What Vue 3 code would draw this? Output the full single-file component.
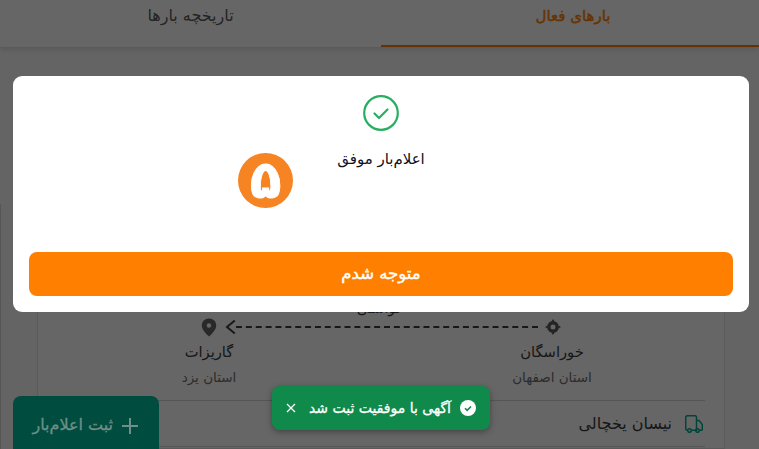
<script setup>
const stops = [
  { city: 'خوراسگان', province: 'استان اصفهان' },
  { city: 'گاریزات', province: 'استان یزد' },
]
</script>

<template>
  <div class="page" dir="rtl">
    <nav class="tabs">
      <div class="tab active">بارهای فعال</div>
      <div class="tab">تاریخچه بارها</div>
    </nav>
    <div class="strip"></div>
    <main class="panel">
      <section class="card">
        <div class="route-label">خواستی</div>
        <div class="route">
          <div class="line">
            <svg width="16" height="16" viewBox="0 0 16 16">
              <circle cx="8" cy="8" r="4.200" fill="none" stroke="#5a5a5a" stroke-width="3.400" />
              <path d="M8 0l1.600 2.500H6.400zM8 16l1.600-2.500H6.400zM0 8l2.500 1.600V6.400zM16 8l-2.500 1.600V6.400z" fill="#5a5a5a" />
            </svg>
            <div class="dash"></div>
            <svg class="arrow" width="11" height="16" viewBox="0 0 11 16">
              <path d="M9.800 1.500L2 8l7.800 6.500" fill="none" stroke="#3e3e3e" stroke-width="2" />
            </svg>
            <svg width="16" height="19" viewBox="0 0 16 19">
              <path d="M8 0.500C3.800 0.500 0.800 3.500 0.800 7.600 0.800 12 5.500 16.500 8 18.500 10.500 16.500 15.200 12 15.200 7.600 15.200 3.500 12.200 0.500 8 0.500z" fill="#666" />
              <circle cx="8" cy="7.500" r="2.200" fill="#fff" />
            </svg>
          </div>
          <div class="stops">
            <div v-for="s in stops" :key="s.city" class="stop">
              <div class="city">{{ s.city }}</div>
              <div class="province">{{ s.province }}</div>
            </div>
          </div>
        </div>
        <div class="vehicle">
          <svg width="18" height="18" viewBox="0 0 18 18" fill="none" stroke="#00a88d" stroke-width="1.500">
            <path d="M2.700 15.300H2.500A1.800 1.800 0 0 1 .7 13.500V2.500A1.800 1.800 0 0 1 2.500 .7H10A1.500 1.500 0 0 1 11.500 2.200V15.300H6.300" />
            <path d="M11.500 5.500H14L17.300 9.500V14.500A.8.800 0 0 1 16.500 15.300H14.300" />
            <circle cx="4.500" cy="15.500" r="1.800" />
            <circle cx="12.500" cy="15.500" r="1.800" />
          </svg>
          <span>نیسان یخچالی</span>
        </div>
      </section>
    </main>
    <div class="edge"></div>

    <div class="overlay"></div>

    <div class="fab">
      <svg width="16" height="16" viewBox="0 0 16 16" stroke="#6f8f88" stroke-width="2">
        <path d="M8 0v16M0 8h16" />
      </svg>
      <span>ثبت اعلام‌بار</span>
    </div>

    <div class="modal">
      <svg class="ok" width="38" height="38" viewBox="0 0 38 38" fill="none" stroke="#27ae60" stroke-width="2.200">
        <circle cx="19" cy="19" r="16.800" />
        <path d="M12.500 19.500l4.500 4.500 8.500-8.500" stroke-linecap="round" stroke-linejoin="round" />
      </svg>
      <div class="body">
        <div class="badge">۵</div>
        <div class="msg">اعلام‌بار موفق</div>
      </div>
      <button class="confirm">متوجه شدم</button>
    </div>

    <div class="toast">
      <svg width="16" height="16" viewBox="0 0 16 16">
        <circle cx="8" cy="8" r="8" fill="#fff" />
        <path d="M5 8.200l2.200 2.200L11 6.500" fill="none" stroke="#0f8a4a" stroke-width="1.600" />
      </svg>
      <span>آگهی با موفقیت ثبت شد</span>
      <svg class="close" width="10" height="10" viewBox="0 0 10 10" stroke="#fff" stroke-width="1.300">
        <path d="M1 1l8 8M9 1l-8 8" />
      </svg>
    </div>
  </div>
</template>

<style>
html, body { margin: 0; background: #fff; overflow: hidden; }
</style>

<style scoped>
.page {
  position: relative;
  width: 759px;
  height: 449px;
  overflow: hidden;
  background: #fafafa;
  font-family: "DejaVu Sans", "Noto Sans", sans-serif;
}
.tabs {
  display: flex;
  height: 47px;
  background: #fff;
  box-shadow: 0 2px 6px rgba(0, 0, 0, .15);
  position: relative;
}
.tab {
  flex: 1;
  text-align: center;
  padding-top: 6px;
  font-size: 16px;
  line-height: 20px;
  color: #5a5a5a;
}
.tab.active {
  flex: 0 0 378px;
  box-sizing: border-box;
  height: 47px;
  padding-left: 6px;
  color: #ff7f00;
  font-size: 15px;
  -webkit-text-stroke: .4px #ff7f00;
  border-bottom: 2px solid #ff7f00;
}
.strip { height: 81px; }
.panel {
  padding: 0 34px 0 37px;
  height: 321px;
}
.card {
  height: 321px;
  padding: 0 19px 0 18px;
  border: 1px solid #e2e2e2;
  background: #fff;
  box-sizing: border-box;
}
.route-label {
  padding-top: 169px;
  text-align: center;
  font-size: 14px;
  line-height: 20px;
  color: #3a3a3a;
}
.route { margin: 0 93px 0 93px; }
.line {
  display: flex;
  align-items: center;
  height: 18px;
  padding: 0 51px 0 52px;
}
.dash { flex: 1; border-top: 2px dashed #3e3e3e; margin-right: 7px; }
.arrow { margin-left: 8px; }
.stops { display: flex; justify-content: space-between; margin-top: 6px; }
.stop { width: 120px; text-align: center; white-space: nowrap; }
.city { font-size: 14.700px; line-height: 20px; color: #3a3a3a; }
.province { font-size: 13.500px; line-height: 20px; margin-top: 5px; color: #707070; }
.vehicle {
  display: flex;
  align-items: center;
  gap: 13px;
  margin-top: 13px;
  height: 47px;
  padding-right: 2px;
  box-sizing: border-box;
  border-top: 1px solid #d4d4d4;
  border-bottom: 1px solid #d4d4d4;
  font-size: 16px;
  color: #3a3a3a;
}
.edge {
  position: absolute;
  left: 0;
  top: 204px;
  bottom: 0;
  width: 1px;
  background: #d8d8d8;
}
.fab {
  position: absolute;
  left: 13px;
  top: 396px;
  width: 146px;
  height: 70px;
  border-radius: 8px;
  background: #004d40;
  box-sizing: border-box;
  display: flex;
  align-items: flex-start;
  gap: 9px;
  padding: 22px 21px 0 0;
  font-size: 16px;
  line-height: 14px;
  white-space: nowrap;
  color: #6f8f88;
  -webkit-text-stroke: .3px #6f8f88;
}
.overlay {
  position: absolute;
  inset: 0;
  background: rgba(0, 0, 0, .6);
}
.modal {
  position: absolute;
  left: 13px;
  top: 76px;
  width: 736px;
  height: 236px;
  background: #fff;
  border-radius: 9px;
  box-sizing: border-box;
  padding: 18px 16px 16px;
  display: flex;
  flex-direction: column;
  align-items: center;
}
.ok { display: block; }
.body {
  flex: 1;
  width: 100%;
  position: relative;
  text-align: center;
}
.msg {
  margin-top: 17px;
  font-size: 15px;
  line-height: 20px;
  color: #111122;
}
.badge {
  position: absolute;
  left: 209px;
  top: 21px;
  width: 55px;
  height: 55px;
  border-radius: 50%;
  background: #f78422;
  color: #fff;
  font-size: 52px;
  font-weight: 700;
  -webkit-text-stroke: .8px #fff;
  line-height: 55px;
  text-align: center;
}
.confirm {
  width: 100%;
  height: 44px;
  border: 0;
  border-radius: 8px;
  padding: 0 0 2px;
  background: #ff7f00;
  color: #fff;
  font: 400 16.500px "DejaVu Sans", sans-serif;
  -webkit-text-stroke: .4px #fff;
}
.toast {
  position: absolute;
  left: 272px;
  top: 386px;
  width: 218px;
  height: 44px;
  box-sizing: border-box;
  padding: 0 14px;
  border-radius: 8px;
  background: #0f8a4a;
  box-shadow: 0 2px 6px rgba(0, 0, 0, .35);
  color: #fff;
  font-size: 14px;
  -webkit-text-stroke: .3px #fff;
  white-space: nowrap;
  display: flex;
  align-items: center;
  gap: 9px;
}
.close { margin-right: auto; }
</style>
